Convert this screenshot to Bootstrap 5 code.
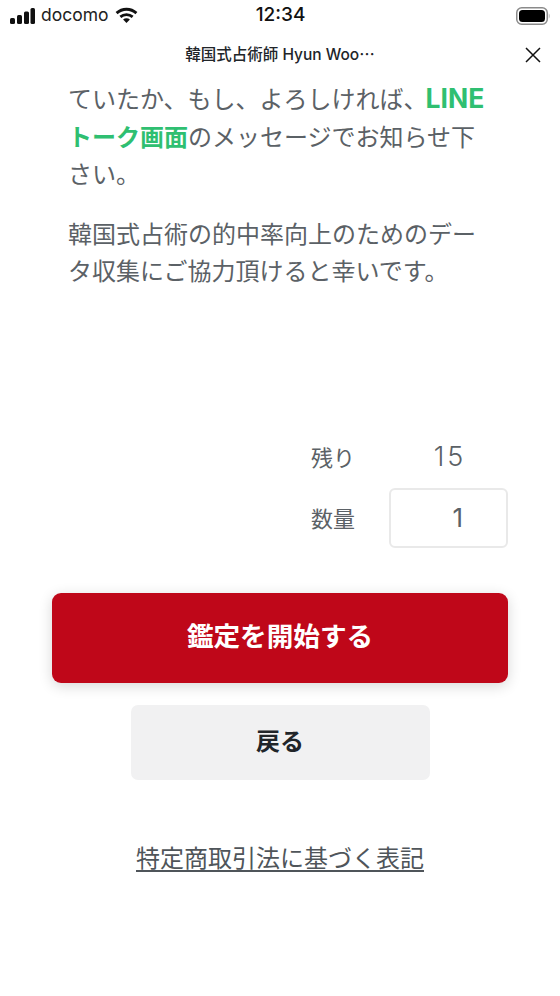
<!DOCTYPE html>
<html lang="ja"><head><meta charset="utf-8">
<link href="https://cdn.jsdelivr.net/npm/bootstrap@5.3.0/dist/css/bootstrap.min.css" rel="stylesheet">
<style>
html,body{height:996px;overflow:hidden;background:#fff}
body{font-family:"Liberation Sans","Noto Sans CJK JP",sans-serif;color:#212529;width:560px}
.sb{height:31px;padding:0 10px 0 10px;color:#111}
.sb-side{width:200px}
.carrier{font-family:Inter,"Liberation Sans",sans-serif;font-size:17.5px;color:#222;margin-left:6px}
.wifi{margin-left:6px}
.sb-time{font-family:Inter,sans-serif;font-weight:500;font-size:19px;margin-left:1px}
.tb{height:47px;position:relative}
.tb-title{font-family:Inter,"Noto Sans CJK JP",sans-serif;font-size:15.5px;font-weight:500;padding-top:1px}
.tb-x{position:absolute;right:18px;top:15px;line-height:0}
.main{padding:1px 68px 0}
.para{font-family:"Noto Sans CJK JP",sans-serif;font-size:24px;line-height:37.5px;color:#5b6166;margin:0}
.para+.para{margin-top:22px}
.hl{color:#2fbf71;font-weight:700}
.hl-en{font-family:Inter,sans-serif;font-size:26.5px;line-height:0;margin-left:-2px}
.stock{margin-top:139px;padding-right:52px;color:#5b6166;font-family:Inter,"Noto Sans CJK JP",sans-serif}
.lab{width:78px;font-size:22px;font-family:"Noto Sans CJK JP",sans-serif;padding-bottom:2px}
.lab-qty{padding-bottom:0}
.val{width:119px;height:60px;font-size:26px;font-weight:300}
.val-num{font-size:27px;letter-spacing:3px;padding-left:3px}
.val-in{border:2px solid #e9e9e9;border-radius:6px;padding-right:43px;font-weight:400}
.go{display:block;width:456px;height:90px;margin:45px auto 0;padding-bottom:6px;background:#bf0719;border:0;border-radius:9px;color:#fff;font-family:"Noto Sans CJK JP",sans-serif;font-weight:700;font-size:26.6px;box-shadow:0 3px 14px rgba(0,0,0,.16)}
.back{display:block;width:299px;height:75px;margin:22px auto 0;padding-bottom:5px;background:#f1f1f2;border:0;border-radius:7px;color:#212529;font-family:"Noto Sans CJK JP",sans-serif;font-weight:700;font-size:24px}
.law{margin-top:59px;font-family:"Noto Sans CJK JP",sans-serif;font-size:24px;line-height:36px;color:#4f555a}
.law a{color:inherit;text-decoration:underline;text-underline-offset:3px;text-decoration-thickness:1.5px}
</style></head><body>
<div class="sb d-flex align-items-center justify-content-between">
<div class="sb-side d-flex align-items-center">
<svg width="25" height="16" viewBox="0 0 25 16" fill="#111"><rect x="0" y="10" width="5" height="6" rx="1.5"/><rect x="7" y="7" width="5" height="9" rx="1.5"/><rect x="14" y="3.5" width="5" height="12.5" rx="1.5"/><rect x="20.5" y="0" width="4.5" height="16" rx="1.5"/></svg>
<span class="carrier">docomo</span>
<svg class="wifi" width="23" height="17" viewBox="0 0 24 18" fill="none" stroke="#111" stroke-width="3"><path d="M1.500 6.500C7.500 1 16.500 1 22.500 6.500"/><path d="M5.500 10.500c3.800-3.300 9.200-3.300 13 0"/><path d="M12 17l-3.600-3.800c2-1.600 5.200-1.600 7.200 0z" fill="#111" stroke="none"/></svg>
</div>
<div class="sb-time">12:34</div>
<div class="sb-side d-flex justify-content-end">
<svg width="34" height="18" viewBox="0 0 34 18"><rect x=".75" y=".75" width="30.500" height="16.500" rx="5" fill="none" stroke="#8a8a8a" stroke-width="1.500"/><rect x="3" y="3" width="26" height="12" rx="3.500" fill="#000"/><path d="M32.800 6.500c1 .5 1 4.500 0 5z" fill="#999"/></svg>
</div>
</div>
<div class="tb d-flex align-items-center justify-content-center">
<span class="tb-title">韓国式占術師 Hyun Woo⋯</span>
<span class="tb-x"><svg width="18" height="18" viewBox="0 0 18 18" stroke="#111" stroke-width="1.500"><path d="M2 2l14 14M16 2L2 16"/></svg></span>
</div>
<main class="main">
<p class="para">ていたか、もし、よろしければ、<span class="hl hl-en">LINE</span> <span class="hl">トーク画面</span>のメッセージでお知らせ下さい。</p>
<p class="para">韓国式占術の的中率向上のためのデータ収集にご協力頂けると幸いです。</p>
</main>
<div class="stock">
<div class="d-flex justify-content-end align-items-center">
<div class="lab">残り</div><div class="val val-num d-flex align-items-center justify-content-center">15</div>
</div>
<div class="d-flex justify-content-end align-items-center">
<div class="lab lab-qty">数量</div><div class="val val-in d-flex align-items-center justify-content-end">1</div>
</div>
</div>
<button class="go" type="button">鑑定を開始する</button>
<button class="back" type="button">戻る</button>
<div class="law text-center"><a href="#">特定商取引法に基づく表記</a></div>
</body></html>
